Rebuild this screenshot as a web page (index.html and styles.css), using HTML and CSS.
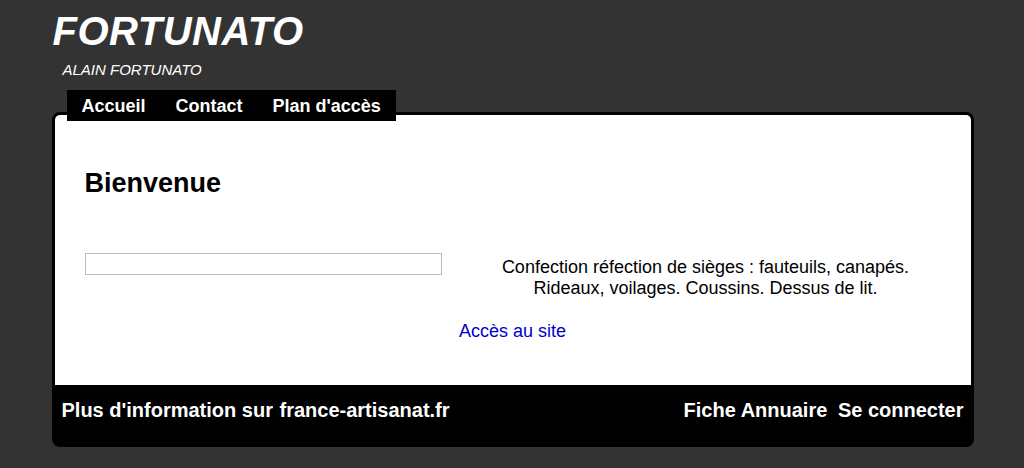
FILE: index.html
```html
<!DOCTYPE html>
<html>
<head>
  <title>FORTUNATO</title>
  <link rel="stylesheet" href="styles.css">
</head>
<body>
  <div class="page">
    <div class="header">
      <div class="site-title">FORTUNATO</div>
      <div class="site-subtitle">ALAIN FORTUNATO</div>
    </div>

    <ul class="menu">
      <li>Accueil</li>
      <li>Contact</li>
      <li>Plan d'accès</li>
    </ul>

    <div class="box">
      <div class="content">
        <h1>Bienvenue</h1>
        <div class="cols">
          <div class="col-left">
            <div class="frame"></div>
          </div>
          <div class="col-right">
            Confection réfection de sièges : fauteuils, canapés.<br>
            Rideaux, voilages. Coussins. Dessus de lit.
          </div>
        </div>
        <div class="site-link"><a href="#">Accès au site</a></div>
      </div>
      <div class="footer">
        <div class="footer-left">
          <span>Plus d'information sur</span>
          <span>france-artisanat.fr</span>
        </div>
        <div class="footer-right">
          <span>Fiche Annuaire</span>
          <span>Se connecter</span>
        </div>
      </div>
    </div>
  </div>
</body>
</html>
```

FILE: styles.css
```css
body {
  margin: 0;
  background-color: #333333;
  font-family: "Liberation Sans", Arial, sans-serif;
  color: #000;
}
.page {
  width: 922px;
  margin: 0 auto;
  padding-left: 1px;
}
.header {
  height: 90px;
}
.site-title {
  font-size: 40px;
  font-weight: bold;
  font-style: italic;
  color: #fff;
  line-height: 46px;
  padding-top: 8px;
  padding-left: 1px;
  letter-spacing: 0.5px;
}
.site-subtitle {
  font-size: 15px;
  font-style: italic;
  color: #fff;
  padding-left: 11px;
  margin-top: 7px;
}
.menu {
  list-style: none;
  margin: 0 0 -9px 15px;
  padding: 0;
  display: flex;
  width: fit-content;
  background-color: #000;
  position: relative;
  z-index: 1;
}
.menu li {
  color: #fff;
  font-size: 18px;
  font-weight: bold;
  padding: 1px 15px 0 15px;
  line-height: 30px;
}
.box {
  border: 3px solid #000;
  border-radius: 8px;
  background-color: #000;
  overflow: hidden;
}
.content {
  background-color: #fff;
  padding: 52px 30px 0 30px;
  height: 218px;
}
h1 {
  font-size: 27px;
  margin: 0;
  line-height: 32px;
}
.cols {
  display: grid;
  grid-template-columns: 357px 1fr;
  gap: 29px;
  margin-top: 54px;
}
.frame {
  height: 20px;
  border: 1px solid #bbbbbb;
}
.col-right {
  text-align: center;
  font-size: 18px;
  line-height: 21px;
  padding-top: 4px;
}
.site-link {
  text-align: center;
  font-size: 18px;
  margin-top: 22px;
}
.site-link a {
  color: #0000cc;
  text-decoration: none;
}
.footer {
  display: flex;
  justify-content: space-between;
  height: 59px;
  padding: 0 7px;
  color: #fff;
  font-weight: bold;
  font-size: 20px;
  line-height: 50px;
}
.footer-left span + span {
  margin-left: 1px;
}
.footer-right span + span {
  margin-left: 5px;
}
```
